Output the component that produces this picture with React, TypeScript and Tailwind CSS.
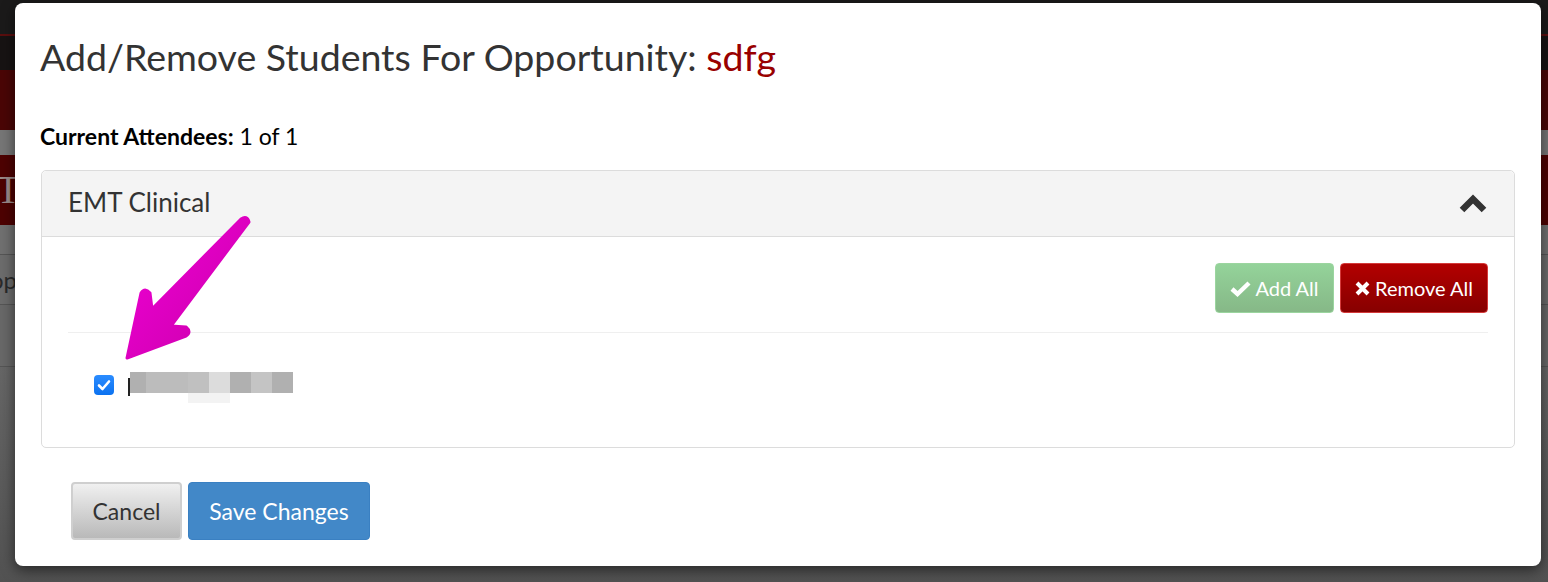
import React from "react";

const font = { fontFamily: "Lato, 'Noto Sans', sans-serif" };

function ChevronUp() {
  return (
    <svg width="28" height="20" viewBox="0 0 28 20" className="block">
      <path d="M3 16 L14 5 L25 16" fill="none" stroke="#333" strokeWidth="6.5" strokeLinejoin="miter" />
    </svg>
  );
}

function CheckIcon() {
  return (
    <svg width="21" height="17" viewBox="0 0 21 17" className="block">
      <path d="M2 9 L7.5 14 L19 3" fill="none" stroke="#fff" strokeWidth="4.4" />
    </svg>
  );
}

function TimesIcon() {
  return (
    <svg width="15" height="15" viewBox="0 0 15 15" className="block">
      <path d="M2 2 L13 13 M13 2 L2 13" fill="none" stroke="#fff" strokeWidth="4" />
    </svg>
  );
}

function BlurredName() {
  const blocks = [
    { w: "w-[16px]", c: "bg-[#b0b0b0]" },
    { w: "w-[42px]", c: "bg-[#bcbcbc]" },
    { w: "w-[21px]", c: "bg-[#c0c0c0]" },
    { w: "w-[21px]", c: "bg-[#dcdcdc]" },
    { w: "w-[21px]", c: "bg-[#b0b0b0]" },
    { w: "w-[21px]", c: "bg-[#c4c4c4]" },
    { w: "w-[21px]", c: "bg-[#b0b0b0]" },
  ];
  return (
    <div className="flex items-start">
      <div className="w-[2px] h-[18px] bg-[#222] mt-[6px]" />
      <div className="flex flex-col">
        <div className="flex h-[21px]">
          {blocks.map((b, i) => (
            <div key={i} className={`${b.w} ${b.c} h-full`} />
          ))}
        </div>
        <div className="flex h-[10px]">
          <div className="w-[58px]" />
          <div className="w-[42px] bg-[#f3f3f3]" />
        </div>
      </div>
    </div>
  );
}

export default function App() {
  return (
    <div className="relative w-[1548px] h-[582px] overflow-hidden bg-[#5c5c5c]" style={font}>
      {/* dimmed page behind the modal */}
      <div className="flex flex-col h-full">
        <div className="h-[34px] bg-[#1b1a1a]" />
        <div className="h-[2px] bg-[#5a0e0e]" />
        <div className="h-[34px] bg-[#171313]" />
        <div className="h-[60px] bg-[#4a0606]" />
        <div className="h-[25px] bg-[#767676]" />
        <div className="h-[70px] bg-[#4d0202] flex items-center text-[#9a8a8a] text-[40px]" style={{ fontFamily: "'Liberation Serif', serif" }}>
          <span className="-ml-[4px]">Tr</span>
        </div>
        <div className="h-[30px] bg-[#707070] border-b border-[#555]" />
        <div className="h-[50px] bg-[#6c6c6c] border-b border-[#555] flex items-center text-[24px] text-[#2a2a2a]">
          <span className="-ml-[10px]">op</span>
        </div>
        <div className="h-[62px] bg-[#686868] border-b border-[#555]" />
        <div className="flex-1 bg-gradient-to-b from-[#666] to-[#525252]" />
      </div>

      {/* modal */}
      <div className="absolute left-[15px] top-[3px] w-[1526px] h-[563px] bg-white rounded-[8px] shadow-[0_4px_14px_rgba(0,0,0,0.55)] flex flex-col">
        <div className="px-[25px] pt-[32px]">
          <h4 className="text-[37.5px] leading-[44px] text-[#333]">
            Add/Remove Students For Opportunity: <span className="text-[#990000]">sdfg</span>
          </h4>
          <p className="mt-[44px] text-[23px] leading-[26px] text-black">
            <strong className="font-bold">Current Attendees:</strong> 1 of 1
          </p>
        </div>

        <div className="mx-[26px] mt-[21px] border border-[#dcdcdc] rounded-[5px]">
          <div className="h-[66px] bg-[#f4f4f4] border-b border-[#dcdcdc] rounded-t-[5px] flex items-center justify-between pl-[26px] pr-[27px]">
            <span className="text-[26px] text-[#333] -mt-[2px]">EMT Clinical</span>
            <ChevronUp />
          </div>
          <div className="px-[26px] pt-[26px]">
            <div className="flex justify-end gap-[6px]">
              <button className="h-[50px] w-[119px] flex items-center justify-center gap-[4px] rounded-[4px] border border-[#9bd59f] bg-gradient-to-b from-[#94d39a] to-[#86b887] text-white text-[20px]">
                <CheckIcon />
                Add All
              </button>
              <button className="h-[50px] w-[148px] flex items-center justify-center gap-[5px] rounded-[4px] border border-[#d43a3a] bg-gradient-to-b from-[#b30000] to-[#870000] text-white text-[20px]">
                <TimesIcon />
                Remove All
              </button>
            </div>
            <div className="mt-[19px] h-[1px] bg-[#efefef]" />
            <div className="pt-[39px] pb-[44px] pl-[26px] flex items-start gap-[14px]">
              <div className="mt-[3px] w-[20px] h-[20px] rounded-[4px] bg-gradient-to-b from-[#2a8cff] to-[#0a72f0] flex items-center justify-center">
                <svg width="14" height="12" viewBox="0 0 14 12">
                  <path d="M2 6.5 L5.5 10 L12 2.5" fill="none" stroke="#fff" strokeWidth="2.6" strokeLinecap="round" strokeLinejoin="round" />
                </svg>
              </div>
              <BlurredName />
            </div>
          </div>
        </div>

        <div className="flex gap-[6px] pl-[56px] mt-[34px]">
          <button className="h-[58px] w-[111px] rounded-[4px] border-2 border-[#cfcfcf] bg-gradient-to-b from-[#f0f0f0] to-[#b9b9b9] text-[#333] text-[23px]">
            Cancel
          </button>
          <button className="h-[58px] w-[182px] rounded-[4px] border border-[#3a80c2] bg-[#4288c8] text-white text-[23px]">
            Save Changes
          </button>
        </div>
      </div>

      {/* annotation arrow */}
      <svg className="absolute left-0 top-0 pointer-events-none" width="1548" height="582" viewBox="0 0 1548 582">
        <defs>
          <linearGradient id="arrowGrad" x1="0" y1="0" x2="1" y2="1">
            <stop offset="0" stopColor="#f200d8" />
            <stop offset="1" stopColor="#c800a8" />
          </linearGradient>
        </defs>
        <path
          d="M127 358 L141 293 Q145 287 150 293 L152 309 L241 219 Q247 215 249 222 L171 326 L186 327 Q192 332 186 336 Z"
          fill="url(#arrowGrad)"
          stroke="url(#arrowGrad)"
          strokeWidth="3"
          strokeLinejoin="round"
        />
      </svg>
    </div>
  );
}
